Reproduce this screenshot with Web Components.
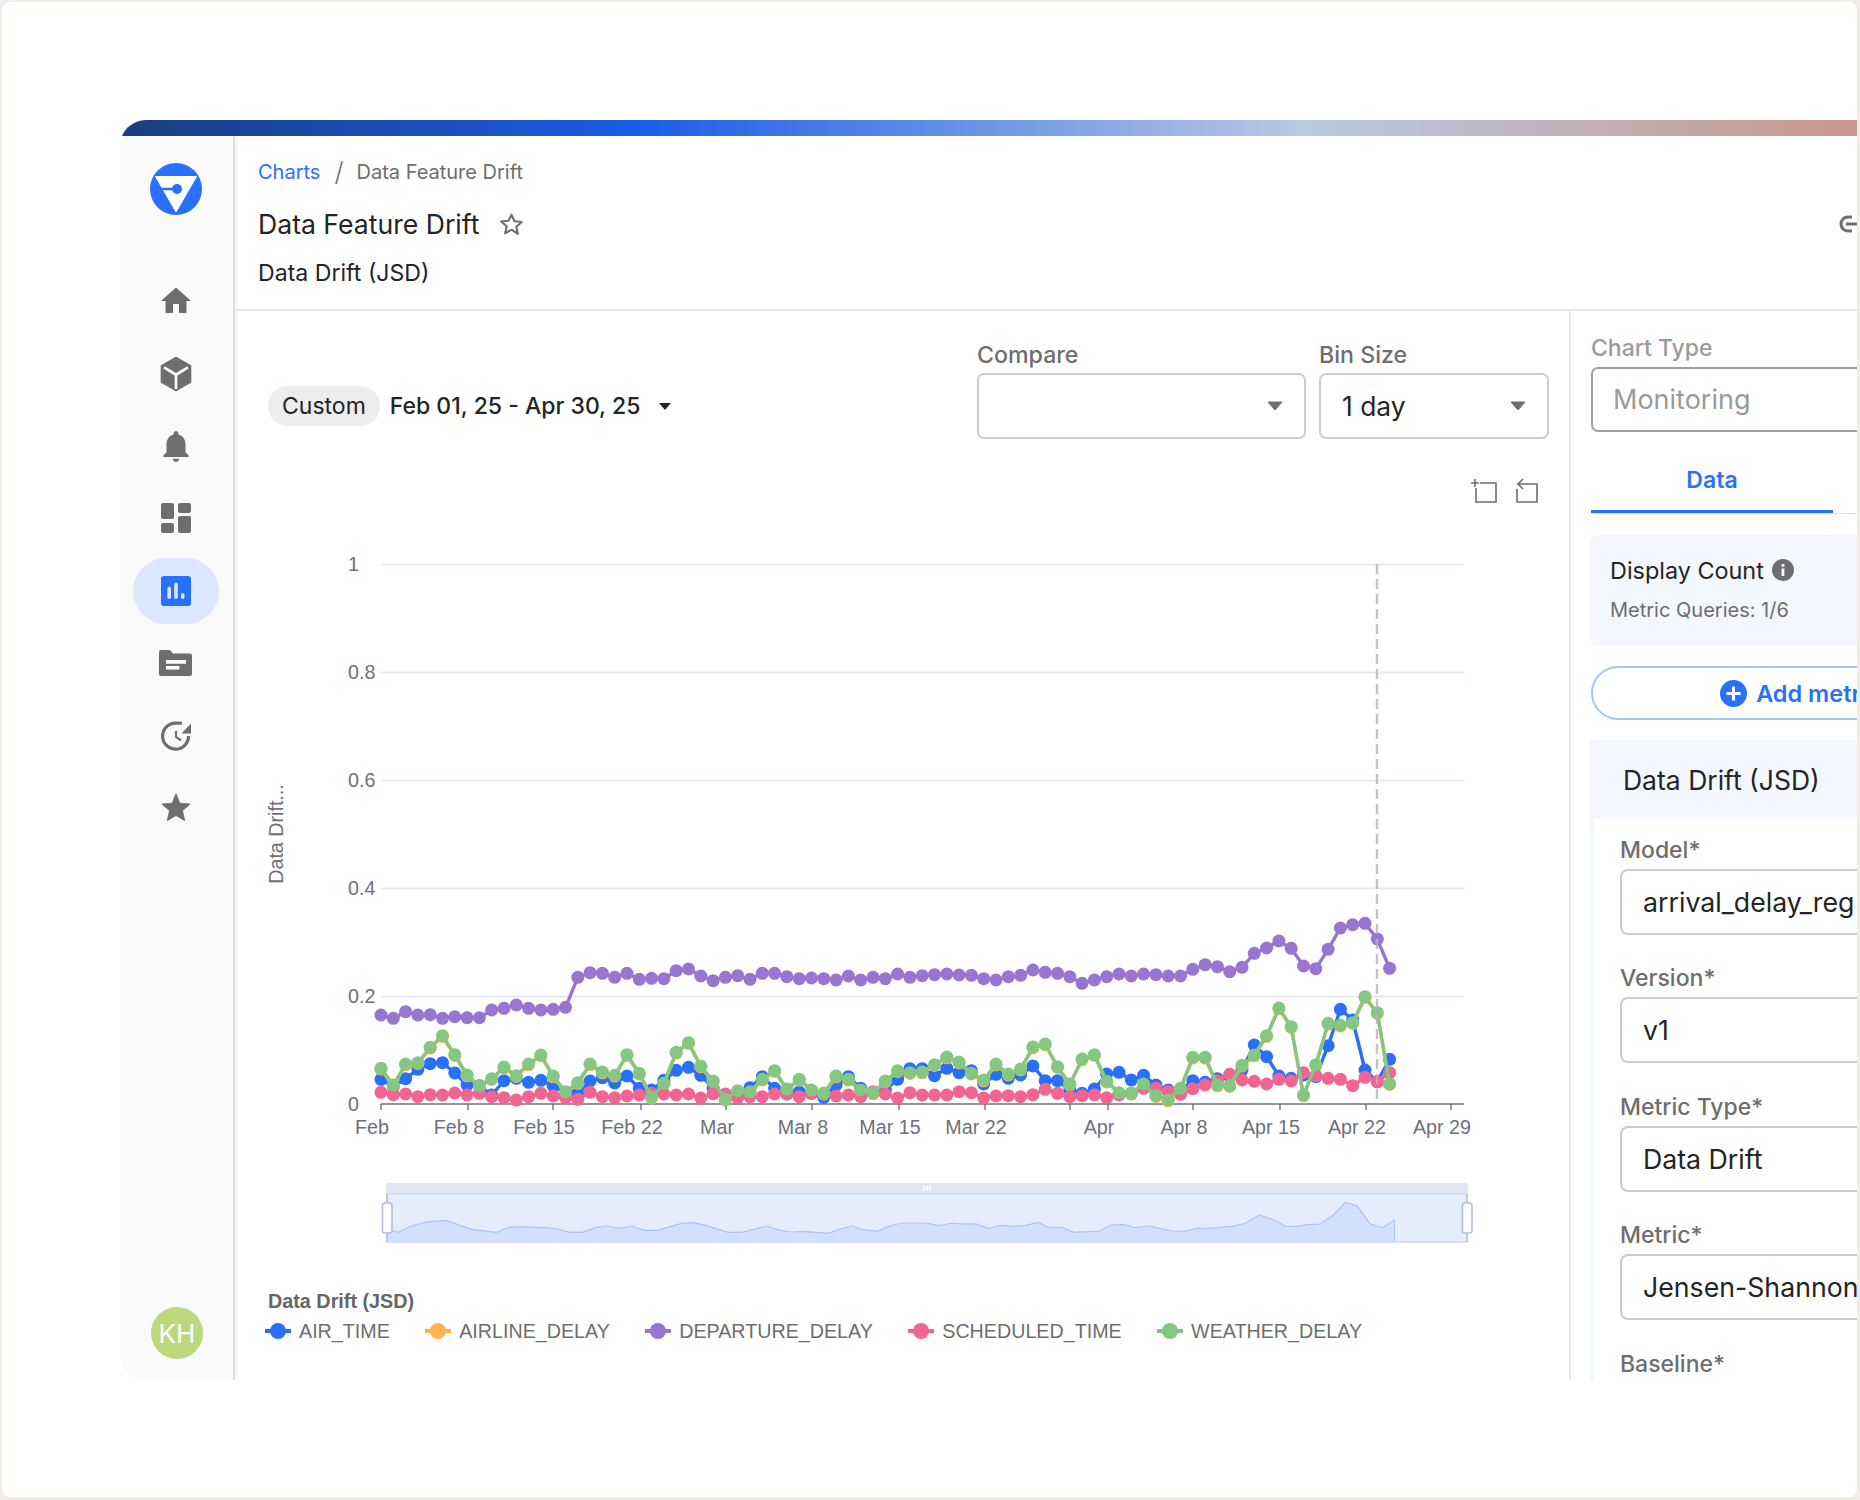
<!DOCTYPE html>
<html lang="en">
<head>
<meta charset="utf-8">
<title>Data Feature Drift</title>
<style>
  html, body { margin: 0; padding: 0; background: #f1ede6; }
  body { font-family: Inter, "Liberation Sans", sans-serif; }
</style>
</head>
<body>
<app-shell>
  <side-nav slot="nav"></side-nav>
  <page-header slot="header"></page-header>
  <chart-area slot="chart">
    <date-toolbar></date-toolbar>
    <drift-chart></drift-chart>
    <chart-legend></chart-legend>
  </chart-area>
  <config-panel slot="panel"></config-panel>
</app-shell>

<script>
class AppShell extends HTMLElement {
    constructor() {
        super();
        this.attachShadow({mode: "open"}).innerHTML = `
            <style>
                :host { display: block; width: 1860px; height: 1500px; box-sizing: border-box; padding: 2px 3px 3px 2px; }
                #card { height: 100%; box-sizing: border-box; background: #fff; border-radius: 8px; padding: 118px 0 0 118px; overflow: hidden; }
                #frame { height: 1260px; display: flex; flex-direction: column; overflow: hidden; border-radius: 26px 0 0 26px; }
                #bar { flex: none; height: 16px; background: linear-gradient(90deg, #1b3d7f 0%, #1a5de8 30%, #b9c9e4 68%, #c9968a 100%); }
                #body { flex: 1; display: flex; min-height: 0; }
                #main { flex: 1; min-width: 0; display: flex; flex-direction: column; }
                #work { flex: 1; display: flex; min-height: 0; overflow: hidden; }
            </style>
            <div id="card">
                <div id="frame">
                    <div id="bar"></div>
                    <div id="body">
                        <slot name="nav"></slot>
                        <div id="main">
                            <slot name="header"></slot>
                            <div id="work">
                                <slot name="chart"></slot>
                                <slot name="panel"></slot>
                            </div>
                        </div>
                    </div>
                </div>
            </div>
        `;
    }
}

class SideNav extends HTMLElement {
    constructor() {
        super();
        this.attachShadow({mode: "open"}).innerHTML = `
            <style>
                :host { display: flex; flex-direction: column; align-items: center; flex: none; box-sizing: border-box; width: 115px; height: 100%; padding: 27px 2px 21px 0; background: #fafafa; border-right: 2px solid #dedede; border-bottom-left-radius: 26px; box-shadow: 2px 0 4px rgba(0,0,0,.05); }
                #logo { flex: none; margin-bottom: 50px; display: block; }
                .row { flex: none; height: 72.4px; width: 100%; display: flex; align-items: center; justify-content: center; }
                .pill { width: 86px; height: 66px; border-radius: 33px; background: #dbe7fe; display: flex; align-items: center; justify-content: center; }
                #avatar { margin: auto 0 0 3px; width: 52px; height: 52px; border-radius: 50%; background: #bcd87c; color: #fff; font-size: 26px; display: flex; align-items: center; justify-content: center; }
                svg { display: block; }
            </style>
            <svg id="logo" width="52" height="52" viewBox="0 0 52 52">
                <circle cx="26" cy="26" r="26" fill="#2970ff"/>
                <path d="M5.5 13.5H46.5L26 49Z" fill="#fff" stroke="#fff" stroke-width="1" stroke-linejoin="round"/>
                <path d="M12 26H26" stroke="#2970ff" stroke-width="2.4"/>
                <circle cx="27" cy="26" r="5" fill="#2970ff"/>
            </svg>
            <div class="row"><svg width="36" height="36" viewBox="0 0 24 24" fill="#6e6e6e"><path d="M10 20v-6h4v6h5v-8h3L12 3 2 12h3v8z"/></svg></div>
            <div class="row"><svg width="36" height="36" viewBox="0 0 24 24"><path d="M12 1 21.7 6.6V17.4L12 23 2.3 17.4V6.6Z" fill="#6e6e6e" stroke="#6e6e6e" stroke-linejoin="round"/><path d="M12 12.5 4 7.6M12 12.5 20 7.6M12 12.5V22" stroke="#fafafa" stroke-width="1.8" fill="none"/></svg></div>
            <div class="row"><svg width="38" height="38" viewBox="0 0 24 24" fill="#6e6e6e"><path d="M12 22c1.1 0 2-.9 2-2h-4c0 1.1.9 2 2 2zm6-6v-5c0-3.07-1.63-5.64-4.5-6.32V4c0-.83-.67-1.5-1.5-1.5s-1.5.67-1.5 1.5v.68C7.64 5.36 6 7.92 6 11v5l-2 2v1h16v-1l-2-2z"/></svg></div>
            <div class="row"><svg width="30" height="30" viewBox="0 0 30 30" fill="#6e6e6e"><rect width="13" height="16" rx="2"/><rect y="20" width="13" height="10" rx="2"/><rect x="17" width="13" height="10" rx="2"/><rect x="17" y="13" width="13" height="17" rx="2"/></svg></div>
            <div class="row"><div class="pill"><svg width="30" height="30" viewBox="0 0 30 30"><rect width="30" height="30" rx="3" fill="#2970ff"/><g fill="#dbe7fe"><rect x="6.4" y="10.6" width="3.6" height="12.4" rx="1.8"/><rect x="13.2" y="6.6" width="3.6" height="16.4" rx="1.8"/><rect x="20" y="17" width="3.4" height="6" rx="1.7"/></g></svg></div></div>
            <div class="row"><svg width="33" height="26" viewBox="0 0 33 26"><path d="M2 0h9l3 3.6h17a2 2 0 0 1 2 2V24a2 2 0 0 1-2 2H2a2 2 0 0 1-2-2V2a2 2 0 0 1 2-2z" fill="#6e6e6e"/><rect x="7" y="10" width="20" height="3.8" fill="#fafafa"/><rect x="7" y="16" width="13.4" height="3.6" fill="#fafafa"/></svg></div>
            <div class="row"><svg width="30" height="30" viewBox="0 0 30 30"><path d="M27.6 15A13 13 0 1 1 15 2.1H21" fill="none" stroke="#6e6e6e" stroke-width="3.2"/><path d="M30 2.6V12.4H20.6Z" fill="#6e6e6e"/><path d="M15 10V16L20 19.4" fill="none" stroke="#6e6e6e" stroke-width="2.2"/></svg></div>
            <div class="row"><svg width="34" height="34" viewBox="0 0 24 24" fill="#6e6e6e" stroke="#6e6e6e" stroke-width=".6" stroke-linejoin="round"><path d="M12 17.27L18.18 21l-1.64-7.03L22 9.24l-7.19-.61L12 2 9.19 8.63 2 9.24l5.46 4.73L5.82 21z"/></svg></div>
            <div id="avatar">KH</div>
        `;
    }
}

class PageHeader extends HTMLElement {
    constructor() {
        super();
        this.attachShadow({mode: "open"}).innerHTML = `
            <style>
                :host { display: block; flex: none; box-sizing: border-box; height: 175px; padding: 24px 0 0 23px; border-bottom: 2px solid #e8e8e8; color: #242424; }
                #crumbs { display: flex; align-items: center; height: 24px; font-size: 20px; line-height: 24px; color: #6e6e6e; }
                #crumbs a { color: #2970ff; }
                #crumbs i { font-style: normal; font-size: 26px; font-weight: 300; margin: 0 13px 0 14px; color: #6e6e6e; }
                #title { display: flex; align-items: center; height: 34px; margin-top: 23px; font-size: 26.6px; }
                #title svg.star { margin-left: 20px; }
                #title svg.link { margin-left: auto; }
                #sub { margin-top: 17px; font-size: 23.1px; line-height: 30px; }
            </style>
            <div id="crumbs"><a>Charts</a><i>/</i><span>Data Feature Drift</span></div>
            <div id="title">
                <span>Data Feature Drift</span>
                <svg class="star" width="25" height="25" viewBox="0 0 24 24" fill="none" stroke="#6e6e6e" stroke-width="2" stroke-linejoin="round"><path d="M12 2.6l2.9 6.3 6.9.7-5.2 4.6 1.5 6.8L12 17l-6.1 3.5 1.5-6.8-5.2-4.6 6.9-.7z"/></svg>
                <svg class="link" width="18" height="18" viewBox="0 0 18 18" fill="none" stroke="#6e6e6e" stroke-width="3"><path d="M13 2H9a7 7 0 0 0 0 14h4M7 9H18"/></svg>
            </div>
            <div id="sub">Data Drift (JSD)</div>
        `;
    }
}

class ChartArea extends HTMLElement {
    constructor() {
        super();
        this.attachShadow({mode: "open"}).innerHTML = `
            <style>
                :host { display: block; flex: none; box-sizing: border-box; width: 1336px; height: 100%; border-right: 2px solid #e8e8e8; overflow: hidden; }
            </style>
            <slot></slot>
        `;
    }
}

class SelectBox extends HTMLElement {
    constructor() {
        super();
        this.attachShadow({mode: "open"}).innerHTML = `
            <style>
                :host { display: block; }
                label { display: block; height: 26px; line-height: 26px; margin-bottom: 5px; font-size: 23.2px; font-weight: 500; color: #6e6e6e; }
                #box { display: flex; align-items: center; box-sizing: border-box; height: 66px; padding: 0 20px 0 21px; border: 2px solid #cccccc; border-radius: 7px; font-size: 26.4px; color: #242424; }
                svg { margin-left: auto; }
            </style>
            <label>${this.getAttribute("label")}</label>
            <div id="box"><span><slot></slot></span><svg width="18" height="10" viewBox="0 0 18 10"><path d="M2 1H16L9 9Z" fill="#6e6e6e" stroke="#6e6e6e" stroke-width="1" stroke-linejoin="round"/></svg></div>
        `;
        this.style.width = this.getAttribute("width") + "px";
    }
}

class DateToolbar extends HTMLElement {
    constructor() {
        super();
        this.attachShadow({mode: "open"}).innerHTML = `
            <style>
                :host { display: flex; align-items: flex-end; box-sizing: border-box; padding: 31px 20px 0 33px; gap: 13px; }
                #range { display: flex; align-items: center; height: 66px; margin-right: auto; font-size: 23px; font-weight: 500; color: #242424; }
                #custom { display: flex; align-items: center; height: 40px; padding: 0 14px; background: #ededed; border-radius: 20px; font-weight: 400; margin-right: 10px; }
                #range svg { margin-left: 19px; }
            </style>
            <div id="range">
                <span id="custom">Custom</span>
                <span>Feb 01, 25 - Apr 30, 25</span>
                <svg width="12" height="7" viewBox="0 0 12 7"><path d="M0 0H12L6 7Z" fill="#242424"/></svg>
            </div>
            <select-box label="Compare" width="329"></select-box>
            <select-box label="Bin Size" width="230">1 day</select-box>
        `;
    }
}

const DAY = 12.3, X0 = 381;
const toX = i => X0 + i * DAY;
const toY = p => 920 + p / 3;

// series values read as pixels from the 3x crop of the plot, one per day
const PURPLE = [285,295,275,285,284,295,290,293,293,270,265,255,265,270,268,262,172,158,160,172,160,178,175,176,152,147,168,182,172,167,178,160,160,170,176,174,176,180,168,180,
    172,176,162,172,167,164,162,165,166,176,180,170,166,150,157,160,170,190,180,170,162,168,162,164,168,168,148,134,140,155,142,100,84,63,85,138,146,88,24,14,10,57,145];
const GREEN = [445,495,432,428,382,347,404,465,497,476,441,467,432,405,468,515,488,432,456,466,404,460,532,490,397,368,438,483,537,512,515,478,452,507,478,510,520,468,478,510,
    518,483,452,458,456,434,411,426,460,480,432,462,447,381,372,440,492,417,404,484,518,520,492,527,540,505,412,412,495,497,436,405,347,264,320,525,434,310,316,308,230,278,491];
const BLUE = [478,500,476,448,431,428,459,495,497,525,482,475,487,481,498,520,520,483,473,489,468,505,510,481,451,442,466,505,540,525,503,470,505,522,516,520,532,495,470,505,
    520,510,478,446,446,467,445,458,452,492,463,475,465,438,482,482,510,520,507,462,457,480,466,495,510,510,482,487,476,470,450,375,410,468,475,465,470,377,268,300,450,485,418];
const PINK = [517,524,522,530,524,525,519,525,520,530,533,540,530,520,528,533,538,517,530,533,528,525,520,522,525,522,534,521,522,534,530,530,522,522,530,520,520,528,525,530,
    515,522,534,518,525,525,525,515,518,534,528,527,530,524,508,520,530,527,525,533,525,520,505,505,515,523,506,495,482,463,480,484,492,478,483,458,467,475,478,497,472,485,458];

// overview outline, left half from one crop and right half from another
const AREA_L = [[85,208],[115,217],[155,197],[205,185],[260,182],[335,208],[410,217],[447,202],[485,200],[520,203],[555,202],[590,207],[630,217],[668,217],[705,203],[742,198],[778,205],[815,198],[852,211],[890,211],[965,190],[1000,188],[1040,197],[1105,217],[1145,217],[1220,198],[1260,211],[1295,216],[1330,214],[1405,220],[1440,207],[1480,198]];
const AREA_R = [[0,207],[42,214],[75,198],[105,189],[165,189],[200,197],[232,189],[262,192],[295,192],[325,205],[355,196],[390,199],[420,196],[450,187],[480,203],[510,202],[542,217],[605,213],[635,195],[668,194],[695,203],[730,198],[760,206],[790,213],[822,214],[852,204],[885,205],[940,199],[975,190],[1010,165],[1043,178],[1075,198],[1100,200],[1133,194],[1165,192],[1197,165],[1228,127],[1258,139],[1290,191],[1321,203],[1352,180]];

function seriesSvg(vals, color, shift) {
    const pts = vals.map((p, i) => [toX(i), toY(p) + (shift || 0)]);
    const line = pts.map(p => p[0].toFixed(1) + "," + p[1].toFixed(1)).join(" ");
    const dots = pts.map(p => `<circle cx="${p[0].toFixed(1)}" cy="${p[1].toFixed(1)}" r="6.5"/>`).join("");
    return `<polyline points="${line}" fill="none" stroke="${color}" stroke-width="3.4"/><g fill="${color}">${dots}</g>`;
}

class DriftChart extends HTMLElement {
    constructor() {
        super();
        const grid = [[1, 564], [0.8, 672], [0.6, 780], [0.4, 888], [0.2, 996]].map(g =>
            `<line x1="381" x2="1464" y1="${g[1] + .5}" y2="${g[1] + .5}" stroke="#e4e9f7" stroke-width="2"/><text x="348" y="${g[1] + 7}">${g[0]}</text>`).join("");
        const ticks = [[381,"Feb"],[468,"Feb 8"],[553,"Feb 15"],[641,"Feb 22"],[726,"Mar"],[812,"Mar 8"],[899,"Mar 15"],[985,"Mar 22"],[1070,""],[1108,"Apr"],[1193,"Apr 8"],[1280,"Apr 15"],[1366,"Apr 22"],[1451,"Apr 29"]].map(t =>
            `<line x1="${t[0]}" x2="${t[0]}" y1="1104" y2="1110" stroke="#6e7079" stroke-width="1.4"/>` + (t[1] ? `<text x="${t[0] - 9}" y="1134" text-anchor="middle">${t[1]}</text>` : "")).join("");
        const left = AREA_L.map(p => [360 + p[0] / 3, 1160 + p[1] / 3]);
        const right = AREA_R.map(p => [860 + p[0] / 2.529, 1160 + p[1] / 3]);
        const outline = left.concat(right).map(p => p[0].toFixed(1) + "," + p[1].toFixed(1)).join(" ");
        const endX = (860 + 1352 / 2.529).toFixed(1);
        this.attachShadow({mode: "open"}).innerHTML = `
            <style>
                :host { display: block; height: 802px; }
                #tools { display: flex; justify-content: flex-end; gap: 19px; height: 25px; margin-top: 39px; padding-right: 31px; }
                svg { display: block; }
                #plot text { font-family: "Liberation Sans", sans-serif; font-size: 19.7px; fill: #6e7079; }
            </style>
            <div id="tools">
                <svg width="26" height="25" viewBox="0 0 26 25" fill="none" stroke="#6e6e6e" stroke-width="1.6"><path d="M0 5H8M4 1V9M9 5H25V24H5V10"/></svg>
                <svg width="22" height="25" viewBox="0 0 22 25" fill="none" stroke="#6e6e6e" stroke-width="1.6"><path d="M1 6H21V24H1V11M7 1 2 6 7 11"/></svg>
            </div>
            <svg id="plot" width="1334" height="777" viewBox="235 503 1334 777">
                ${grid}
                <line x1="381" x2="1464" y1="1104" y2="1104" stroke="#6e7079" stroke-width="1.6"/>
                <text x="348" y="1111">0</text>
                ${ticks}
                <text transform="translate(283 834) rotate(-90)" text-anchor="middle">Data Drift...</text>
                ${seriesSvg(BLUE, "#2970f8")}
                ${seriesSvg(GREEN, "#fdb44f", 0.8)}
                ${seriesSvg(PURPLE, "#9775d0")}
                ${seriesSvg(PINK, "#f26491")}
                ${seriesSvg(GREEN, "#84c781")}
                <line x1="1377" x2="1377" y1="564" y2="1104" stroke="#b9b4b4" stroke-opacity=".8" stroke-width="2.4" stroke-dasharray="10 5"/>

                <rect x="386" y="1183" width="1082" height="11" rx="2" fill="#dfe5f3"/>
                <rect x="386" y="1194" width="1082" height="48" fill="#e5edfd"/>
                <polygon points="387,1228 ${outline} ${endX},1241 387,1241" fill="#d1e0fc"/>
                <polyline points="387,1228 ${outline}" fill="none" stroke="#a9c4fa" stroke-width="1.2"/>
                <line x1="${endX}" x2="${endX}" y1="1220" y2="1241" stroke="#a9c4fa" stroke-width="1"/>
                <line x1="386" x2="1468" y1="1194" y2="1194" stroke="#ccd7ef" stroke-width="1.6"/>
                <line x1="386" x2="1468" y1="1242" y2="1242" stroke="#ccd7ef" stroke-width="1.6"/>
                <line x1="387" x2="387" y1="1194" y2="1242" stroke="#b4bfd8" stroke-width="1.6"/>
                <line x1="1467" x2="1467" y1="1194" y2="1242" stroke="#b4bfd8" stroke-width="1.6"/>
                <g fill="#fff" stroke="#b4bfd8" stroke-width="1.6">
                    <rect x="382.5" y="1203" width="9.5" height="30" rx="2.5"/>
                    <rect x="1462.5" y="1203" width="9.5" height="30" rx="2.5"/>
                </g>
                <g fill="#fff"><rect x="923" y="1186" width="1.6" height="5"/><rect x="926" y="1186" width="1.6" height="5"/><rect x="929" y="1186" width="1.6" height="5"/></g>
            </svg>
        `;
    }
}

class ChartLegend extends HTMLElement {
    constructor() {
        super();
        const items = [["AIR_TIME", "#2970f8"], ["AIRLINE_DELAY", "#fdb44f"], ["DEPARTURE_DELAY", "#9775d0"], ["SCHEDULED_TIME", "#f26491"], ["WEATHER_DELAY", "#84c781"]];
        this.attachShadow({mode: "open"}).innerHTML = `
            <style>
                :host { display: block; margin-top: 10px; padding-left: 33px; font-family: "Liberation Sans", sans-serif; font-size: 19.7px; color: #6e6e6e; }
                #name { font-weight: 700; height: 22px; line-height: 22px; font-size: 19.8px; color: #666; }
                #row { display: flex; gap: 35.4px; margin: 8px 0 0 -3px; height: 22px; line-height: 22px; }
                .item { display: flex; align-items: center; gap: 8px; }
                svg { display: block; }
            </style>
            <div id="name">Data Drift (JSD)</div>
            <div id="row">${items.map(i => `
                <div class="item"><svg width="26" height="18" viewBox="0 0 26 18"><path d="M0 9H26" stroke="${i[1]}" stroke-width="4"/><circle cx="13" cy="9" r="8" fill="${i[1]}"/></svg><span>${i[0]}</span></div>`).join("")}
            </div>
        `;
    }
}

class FormField extends HTMLElement {
    constructor() {
        super();
        this.attachShadow({mode: "open"}).innerHTML = `
            <style>
                :host { display: block; height: 128.4px; }
                label { display: block; height: 26px; line-height: 26px; font-size: 23px; font-weight: 500; color: #6e6e6e; }
                #box { display: flex; align-items: center; box-sizing: border-box; height: 66px; margin-top: 6px; padding-left: 21px; border: 2px solid #cccccc; border-radius: 8px; font-size: 26.7px; color: #242424; white-space: nowrap; }
            </style>
            <label>${this.getAttribute("label")}</label>
            <div id="box"><slot></slot></div>
        `;
    }
}

class ConfigPanel extends HTMLElement {
    constructor() {
        super();
        this.attachShadow({mode: "open"}).innerHTML = `
            <style>
                :host { display: block; flex: none; box-sizing: border-box; width: 460px; padding: 24px 0 0 20px; color: #242424; }
                #typeLabel { height: 26px; line-height: 26px; font-size: 23px; font-weight: 500; color: #9a9a9a; margin-bottom: 6px; }
                #type { display: flex; align-items: center; box-sizing: border-box; height: 65px; width: 420px; padding-left: 20px; border: 2px solid #a0a0a0; border-radius: 7px; font-size: 27px; color: #9a9a9a; }
                #tabs { height: 62px; margin-top: 20px; width: 420px; border-bottom: 1.5px solid #e4e4e4; box-sizing: border-box; }
                #tab { box-sizing: border-box; width: 242px; height: 61px; line-height: 56px; text-align: center; font-size: 23px; font-weight: 600; color: #2970ff; border-bottom: 3px solid #2970ff; }
                #count { box-sizing: border-box; height: 111px; width: 420px; margin: 21px 0 0 -1px; padding: 21px 0 0 20px; background: #f4f7fe; border-radius: 8px; }
                #countTitle { display: flex; align-items: center; gap: 8px; height: 28px; font-size: 23.4px; }
                #countSub { margin-top: 14px; height: 24px; line-height: 24px; font-size: 20px; color: #6e6e6e; }
                #add { display: flex; align-items: center; justify-content: center; gap: 9px; box-sizing: border-box; height: 54px; width: 419px; margin-top: 20px; border: 2px solid #a4c2fc; border-radius: 27px; font-size: 23.5px; font-weight: 600; color: #2970ff; }
                #section { width: 420px; margin: 20px 0 0 -1px; border-left: 4px solid #f4f7fe; box-sizing: border-box; }
                #sectionHead { height: 79px; margin-left: -4px; padding-left: 33px; display: flex; align-items: center; background: #f4f7fe; font-size: 26.5px; }
                #fields { padding: 18px 0 0 26px; }
                svg { display: block; flex: none; }
            </style>
            <div id="typeLabel">Chart Type</div>
            <div id="type">Monitoring</div>
            <div id="tabs"><div id="tab">Data</div></div>
            <div id="count">
                <div id="countTitle">Display Count
                    <svg width="22" height="22" viewBox="0 0 22 22"><circle cx="11" cy="11" r="11" fill="#6e6e6e"/><rect x="9.6" y="9.5" width="2.8" height="7.5" fill="#f4f7fe"/><rect x="9.6" y="5" width="2.8" height="2.8" fill="#f4f7fe"/></svg>
                </div>
                <div id="countSub">Metric Queries: 1/6</div>
            </div>
            <div id="add">
                <svg width="27" height="27" viewBox="0 0 27 27"><circle cx="13.5" cy="13.5" r="13.5" fill="#2970ff"/><path d="M13.5 6.5V20.5M6.5 13.5H20.5" stroke="#fff" stroke-width="3"/></svg>
                <span>Add metric</span>
            </div>
            <div id="section">
                <div id="sectionHead">Data Drift (JSD)</div>
                <div id="fields">
                    <form-field label="Model*">arrival_delay_reg</form-field>
                    <form-field label="Version*">v1</form-field>
                    <form-field label="Metric Type*">Data Drift</form-field>
                    <form-field label="Metric*">Jensen-Shannon</form-field>
                    <form-field label="Baseline*"></form-field>
                </div>
            </div>
        `;
    }
}

customElements.define("app-shell", AppShell);
customElements.define("side-nav", SideNav);
customElements.define("page-header", PageHeader);
customElements.define("chart-area", ChartArea);
customElements.define("select-box", SelectBox);
customElements.define("date-toolbar", DateToolbar);
customElements.define("drift-chart", DriftChart);
customElements.define("chart-legend", ChartLegend);
customElements.define("form-field", FormField);
customElements.define("config-panel", ConfigPanel);
</script>
</body>
</html>
